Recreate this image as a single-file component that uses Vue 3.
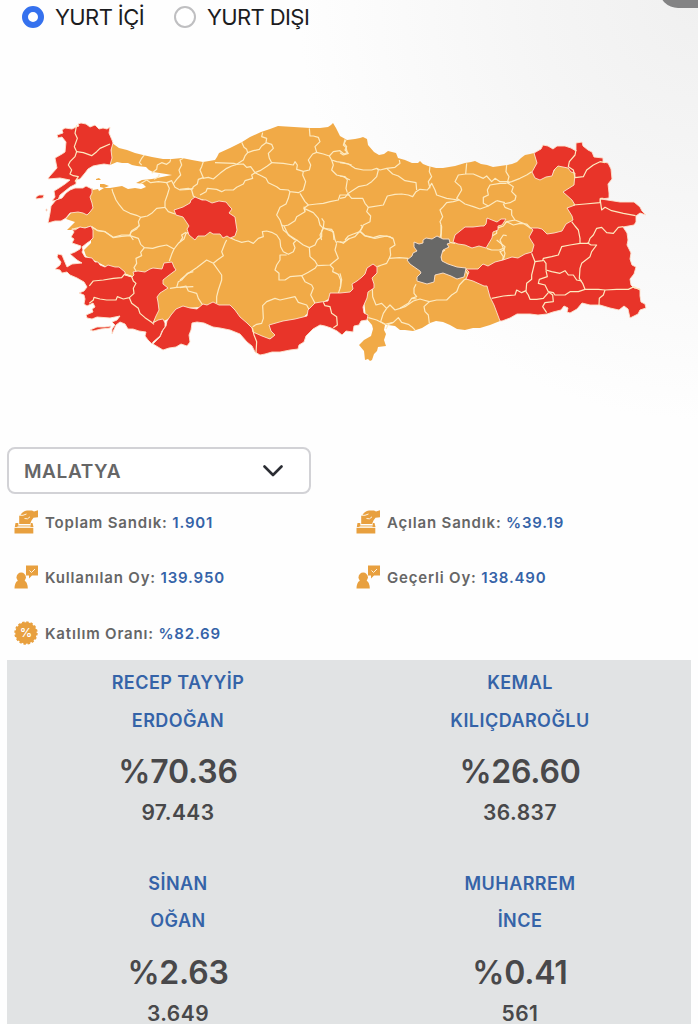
<template>
  <div class="content">
    <div class="corner"></div>

    <div class="radios">
      <label v-for="area in areas" :key="area" class="radio">
        <input v-model="selectedArea" type="radio" name="area" :value="area">
        <span>{{ area }}</span>
      </label>
    </div>

    <svg class="map" viewBox="0 36 698 400" width="698" height="400">
      <path v-for="d in land" :key="d" class="land" :d="d" />
      <g v-for="sheet in borders" :key="sheet.x + '-' + sheet.y" :transform="`translate(${sheet.x} ${sheet.y}) scale(.33333)`">
        <polyline v-for="line in sheet.lines" :key="line" class="border" :points="line" />
      </g>
      <path v-for="d in redProvinces" :key="d" class="province red" :d="d" />
      <path class="province selected" :d="selectedProvince" />
      <g v-for="sheet in redBorders" :key="sheet.x + '-' + sheet.y" :transform="`translate(${sheet.x} ${sheet.y}) scale(.33333)`">
        <polyline v-for="line in sheet.lines" :key="line" class="border" :points="line" />
      </g>
    </svg>

    <div class="select">
      <span>MALATYA</span>
      <svg width="20" height="12" viewBox="0 0 20 12"><path d="M1.5 1.5 10 10l8.500-8.500" /></svg>
    </div>

    <div class="infos">
      <div v-for="info in infos" :key="info.label" class="info">
        <svg v-if="info.icon === 'box'" class="icon" viewBox="0 0 24 24">
          <path d="M6.500 5Q8.500 1.200 13 .5h5l2 1L24 .3v7l-4.500.5-2 2.700-1.500 3.500H5.200V5Z" />
          <path d="M1.500 13h2.800v2.500h12.400V13h1.800l1 4H.8Z" />
          <path d="M.5 17.800h18.800v5.700H.5Z" />
          <path class="cut" d="M5 5.300h4L12.500 4M10.500 8.500l3 .3 2.500-2M3.500 16.800h13" />
        </svg>
        <svg v-else-if="info.icon === 'vote'" class="icon" viewBox="0 0 24 24">
          <circle cx="7.200" cy="12.200" r="4.700" />
          <path d="M4 14.500h6.400l.4 1.500q2.700 1 3 7.500H.5Q.8 17 3.600 16Z" />
          <path d="M12 .5h12v10h-6l-3 3v-3h-3Z" />
          <path class="cut" d="m15.500 5.500 2 2 3.500-3.500" />
        </svg>
        <svg v-else class="icon" viewBox="0 0 24 24">
          <circle cx="12" cy="12" r="10.700" />
          <circle class="scallop" cx="12" cy="12" r="10.700" />
          <text x="12" y="16.200" text-anchor="middle">%</text>
        </svg>
        <span>{{ info.label }}: <b>{{ info.value }}</b></span>
      </div>
    </div>

    <div class="results">
      <div v-for="candidate in candidates" :key="candidate.last" class="candidate">
        <div class="name">{{ candidate.first }}</div>
        <div class="name">{{ candidate.last }}</div>
        <div class="rate">{{ candidate.rate }}</div>
        <div class="votes">{{ candidate.votes }}</div>
      </div>
    </div>
  </div>
</template>

<script setup>
import { ref } from 'vue';

const areas = ['YURT İÇİ', 'YURT DIŞI']
const selectedArea = ref('YURT İÇİ')

const infos = [
  { icon: 'box', label: 'Toplam Sandık', value: '1.901' },
  { icon: 'box', label: 'Açılan Sandık', value: '%39.19' },
  { icon: 'vote', label: 'Kullanılan Oy', value: '139.950' },
  { icon: 'vote', label: 'Geçerli Oy', value: '138.490' },
  { icon: 'percent', label: 'Katılım Oranı', value: '%82.69' }
]

const candidates = [
  { first: 'RECEP TAYYİP', last: 'ERDOĞAN', rate: '%70.36', votes: '97.443' },
  { first: 'KEMAL', last: 'KILIÇDAROĞLU', rate: '%26.60', votes: '36.837' },
  { first: 'SİNAN', last: 'OĞAN', rate: '%2.63', votes: '3.649' },
  { first: 'MUHARREM', last: 'İNCE', rate: '%0.41', votes: '561' }
]

// mainland, then the Marmara islands
const land = [
  'M112 143 L119 148 127 150 135 153 143 155 152 157 163 159 172 159 182 158 192 160 203 162 209 161 215 160 217 157 219 153 230 148 242 142 250 137 261 132 270 129 278 126 294 127 310 128 320 128 328 127 331 125 333 123 336 128 340 136 347 140 355 139 360 138 363 137 367 139 368 145 374 152 379 155 384 154 388 151 396 153 398 158 405 160 412 163 418 163 420 161 423 164 428 166 436 168 443 168 455 166 465 163 471 162 475 161 481 164 487 165 493 167 500 166 507 165 512 164 517 162 521 158 525 155 530 154 534 153 L538 165 552 175 558 164 568 165 577 172 577 190 577 208 577 222 562 234 540 238 536 262 510 270 502 315 500 321 490 325 480 328 473 328 465 330 457 329 450 325 443 322 436 321 430 323 422 328 413 331 405 330 400 330 395 326 388 325 385 325 384 330 386 334 384 340 386 346 378 347 377 351 374 354 372 360 370 361 368 359 365 360 364 351 359 345 364 340 371 336 373 329 372 325 366 318 L364 300 350 295 332 297 316 306 300 320 284 330 266 341 254 335 240 319 225 308 203 307 183 308 166 320 155 324 150 300 150 275 132 276 105 266 86 256 84 250 91 243 91 232 72 230 67 230 69 228 75 222 66 219 92 188 93 190 98 189 99 191 104 188 110 188 116 187 122 186 128 189 135 188 141 189 146 187 143 184 136 183 142 180 152 179 172 175 166 174 153 172 149 170 146 167 137 166 132 165 128 163 122 163 117 162 110 165 Z',
  'M96 179 99 178 101 180 96 180 Z M100 184 104 184 109 186 104 188 100 187 Z'
]

const redProvinces = [
  // Trakya
  'M57 135 63 133 62 130 65 128 72 129 76 127 79 126 78 124 81 123 86 124 90 127 95 125 99 129 103 128 107 129 110 127 109 133 112 140 113 143 111 150 112 158 110 165 104 164 98 165 93 166 88 169 85 173 80 179 76 180 76 184 70 187 65 191 60 195 58 200 52 201 55 197 54 191 59 188 65 184 70 180 60 178 48 179 49 177 57 168 55 158 62 154 65 152 66 142 62 137 58 138 Z',
  'M36 197 39 195 44 195 43 198 36 199 Z M46 209 47 209 47 211 46 211 Z',
  // Çanakkale
  'M48 223 50 213 51 206 56 200 62 198 66 193 70 190 75 188 83 188 86 186 92 189 92 193 90 197 92 203 93 208 90 212 87 215 83 213 78 212 70 213 66 218 61 221 55 221 Z',
  // İzmir, Manisa coast, Aydın, Muğla, Denizli
  'M72 229 75 230 80 227 85 228 91 226 93 230 93 238 90 241 87 243 82 247 83 250 82 252 85 257 92 258 95 262 98 262 100 265 105 267 108 265 115 267 119 267 125 272 125 275 132 277 134 275 133 272 138 271 145 272 150 269 153 268 162 269 164 263 172 262 174 267 176 270 168 276 163 280 163 284 168 288 160 293 157 297 158 302 159 310 156 316 153 323 158 320 163 319 165 323 165 327 162 331 160 336 153 342 152 344 148 340 145 336 146 332 139 331 133 329 128 329 125 324 120 322 116 325 112 334 112 329 115 325 112 322 117 320 120 316 110 318 97 317 92 319 87 318 86 315 93 312 92 309 95 307 93 303 87 306 84 304 85 299 84 295 79 293 84 291 87 287 84 282 77 278 70 275 67 272 62 273 60 270 55 269 60 265 61 262 57 257 58 254 62 255 64 260 67 267 72 264 82 263 77 260 70 254 75 252 80 249 81 246 75 244 72 243 74 239 71 237 74 232 Z',
  'M90 330 97 327 105 327 111 326 110 328 101 329 93 331 Z',
  // Antalya, Mersin, Adana
  'M153 344 160 337 163 330 166 326 167 321 171 315 176 309 183 306 190 308 197 309 203 304 207 305 213 302 219 305 230 305 235 310 240 317 247 323 252 328 253 332 262 336 270 339 275 335 271 331 269 325 276 323 283 321 295 319 307 316 308 310 315 303 321 302 328 301 330 293 340 293 350 292 353 289 352 284 357 281 362 277 365 274 367 268 373 264 377 267 377 273 372 278 374 284 374 288 368 292 367 298 363 307 364 313 368 315 367 320 361 321 359 325 354 326 353 332 346 331 342 335 337 331 331 328 325 326 320 325 313 329 306 336 304 342 299 345 298 349 290 350 280 352 272 352 265 354 260 355 255 352 252 346 247 342 240 334 230 330 220 328 213 327 204 323 197 322 192 323 191 330 189 335 190 342 187 346 181 344 176 347 169 348 163 350 Z',
  // Eskişehir
  'M183 207 190 203 191 200 195 197 202 200 206 200 212 203 219 201 226 202 230 207 232 209 229 213 235 217 236 224 237 230 235 236 230 238 227 236 223 238 220 234 213 234 210 232 205 236 198 236 195 240 189 235 187 229 189 226 183 217 176 215 174 210 Z',
  // Tunceli
  'M453 242 455 235 460 231 465 227 473 227 481 226 484 226 486 224 487 218 492 220 497 222 501 219 506 219 502 225 498 226 498 230 493 232 492 238 489 243 486 248 479 246 472 248 465 245 458 244 Z',
  // Doğu
  'M534 153 541 149 543 145 548 146 553 149 557 146 565 146 571 148 576 151 576 143 582 142 583 146 588 150 592 152 594 157 603 158 603 162 608 163 611 169 612 179 608 184 609 193 609 198 601 199 620 202 627 202 634 202 640 207 642 211 646 215 640 213 636 216 636 222 634 225 623 227 627 233 628 240 627 245 631 253 630 259 632 265 636 267 634 274 630 279 631 285 634 288 640 289 640 296 641 302 645 304 646 308 640 310 638 314 632 317 630 318 628 309 624 306 619 310 610 308 600 305 590 305 582 303 577 309 570 313 567 312 568 308 564 306 561 310 553 312 547 314 538 315 530 314 517 314 510 318 502 321 500 321 497 313 494 305 490 297 487 286 484 286 473 281 466 279 469 272 466 269 472 269 478 269 483 264 488 266 495 262 503 260 512 257 518 258 525 254 532 252 534 245 529 237 533 230 531 228 538 228 542 229 547 234 554 233 562 231 566 224 573 220 572 216 567 208 575 205 572 200 563 192 574 185 575 173 571 172 568 168 558 166 554 170 552 176 546 177 540 180 535 178 532 172 537 163 Z'
]

const selectedProvince = 'M407 260 412 256 413 253 417 251 414 247 414 242 419 244 423 243 423 240 426 238 432 239 437 236 443 239 449 239 450 243 447 244 449 247 443 250 441 257 442 261 448 264 457 267 466 268 465 273 464 277 457 279 451 276 443 273 435 275 434 282 427 284 417 281 417 277 421 273 420 271 410 264 Z'

// borders are kept in separate sheets, three units per pixel
const borders = [
  {
    x: 30, y: 110,
    lines: [
      '335,165 328,158 335,145 343,135',
      '365,190 380,178 382,165 395,158 410,163 420,155 422,148',
      '372,208 386,200 388,192',
      '460,145 450,150 455,165 447,180 452,195 440,208 430,222',
      '330,222 350,210 362,218 385,215 410,218 425,212 430,222 435,232 450,240 475,238 490,235',
      '410,218 418,235 412,255 405,275 405,292 380,295 365,310 352,318 332,322 320,316 300,310 280,300 268,285 258,270 248,245 246,237',
      '405,292 415,305 435,312',
      '332,322 325,335 328,348 305,362 300,375 310,390',
      '125,358 150,352 160,355 185,350 200,360 225,365 250,382 275,375 300,375'
    ]
  },
  {
    x: 30, y: 225,
    lines: [
      '185,5 205,18 225,20 250,38 275,34 300,32 325,40 332,58 343,68 368,70 385,65 410,60 432,72 445,55 462,42 468,25 480,20',
      '300,32 302,22 320,12 328,0',
      '343,68 332,82 335,92 318,100 320,115 312,128 318,138',
      '432,72 425,88 418,108',
      '490,140 472,145 455,165 445,170 440,187 490,185',
      '440,187 420,190'
    ]
  },
  {
    x: 180, y: 110,
    lines: [
      '70,155 65,170 60,180 70,203 55,208 52,222 40,230 35,240 40,258 50,265 70,270',
      '0,238 25,235 35,240',
      '68,205 85,202 100,207 120,190 140,175 155,168 170,163 162,160 105,158',
      '170,163 190,150 195,138 203,128 200,118 192,112 185,97',
      '203,128 220,122 238,118 245,108 258,98 260,85 245,80 248,68',
      '258,98 275,103 280,115 265,130 268,145 275,158 262,168 240,182 225,188 212,170 200,172 190,162 170,163',
      '275,158 310,160 340,165 345,155 352,165 350,178 370,184 388,180 392,165 385,150 398,132 410,127 405,110 420,95 415,82 400,78 390,78 388,55',
      '410,127 430,132 448,138 455,150 470,155 490,158 515,165',
      '448,138 460,125 480,122 492,132 502,128 498,112 490,105 498,90',
      '225,188 215,195 218,205 195,212 190,222 170,232 160,240 135,240 125,245 110,238 82,235 78,245 60,255',
      '225,188 245,198 258,205 265,218 290,230 300,238 325,240 330,245 355,248 370,240 377,215 368,195 370,184',
      '330,245 325,265 318,282 300,292 290,315 300,330 305,345 312,348 325,375 345,390',
      '360,250 375,275 385,285 372,295 375,305 350,320 345,332 325,345 312,348',
      '385,285 410,282 430,280 450,275 475,270 480,255 510,255',
      '372,295 400,308 415,325 420,345 430,355 420,375 425,390',
      '430,355 455,358 460,370 462,390',
      '455,150 460,165 455,180 470,195 490,200 510,210',
      '375,305 372,290'
    ]
  },
  {
    x: 180, y: 225,
    lines: [
      '0,50 8,38 5,30 18,22',
      '0,165 25,145 50,128 80,105 100,115 112,105 130,92 125,80 135,55 140,45',
      '100,115 125,150 125,165 115,195 110,215 110,235',
      '0,188 18,183 25,198 50,205 55,220 68,240',
      '150,38 165,45 185,52 205,48 220,55 235,40 250,35 247,20 260,18 275,22 290,30 300,45 302,65 310,80 325,88 340,80 345,68 340,55 350,45 330,32 310,15 305,0',
      '320,90 300,90 300,105 290,120 285,135 297,145 297,165 315,165 330,155 365,152 385,142 405,130 412,120 405,108 390,95 388,68 370,60 350,45',
      '388,68 405,60 412,45 425,35 425,18 430,8 445,15 460,20 465,45 470,55',
      '425,-20 432,-10 430,8',
      '470,55 465,75 475,100 450,120 412,122',
      '450,120 460,130 458,140 475,148 482,165 482,185 475,205',
      '365,152 375,170 395,180 400,190 392,210 405,235',
      '218,305 230,298 245,295 250,280 248,242 260,230 285,220 300,225 345,215 355,232 380,240 388,255',
      '470,50 490,52 510,40'
    ]
  },
  {
    x: 340, y: 110,
    lines: [
      '15,88 12,100 20,110 15,120 25,130 10,135 0,128',
      '0,158 25,162 45,175 70,180 95,180 110,175 115,180 110,200 95,215 80,225 55,230 25,250 15,262 0,265',
      '0,198 15,200 22,210 18,235 22,248',
      '22,250 35,265 68,265 75,280 85,292 130,285 142,258 165,253 185,252 205,255 218,260 228,245 240,238 262,240 268,232 275,220 285,240 290,255 320,265 355,270',
      '110,175 120,180 140,175 165,172 180,160 178,150',
      '140,175 158,192 175,198 195,212 228,218 230,240',
      '270,168 268,185 275,200 265,215 270,235',
      '380,160 377,192 355,195 345,215 362,230 365,240 350,265 358,270 375,282 400,290 420,297 445,288',
      '377,192 400,192 430,205 440,198 455,215 465,205 480,215 505,215 510,218',
      '500,220 480,220 450,225 442,240 445,255 430,262 430,280 445,288 470,272',
      '358,270 340,275 320,278 310,290 300,300 308,320 300,335 305,350 303,385',
      '85,292 80,305 92,318 90,335 70,345 60,365 40,372 25,378 15,390',
      '60,365 75,378 105,385 140,378 160,385'
    ]
  },
  {
    x: 340, y: 225,
    lines: [
      '0,50 10,55 25,42 45,35 60,18 75,32 100,38 120,32 150,35 160,42 165,60 150,70 152,90 148,100 178,98 205,100',
      '60,18 68,5 62,0',
      '148,100 140,115 125,120 112,125',
      '97,190 98,215 108,240 125,235 140,250 150,240 165,255 180,250 205,235 215,220 230,215 222,205 222,190 228,178',
      '140,250 130,265 122,290 135,298',
      '85,278 110,285 135,298 160,292 175,278 185,292 205,298 215,305 225,315',
      '160,292 145,298 138,312',
      '180,250 195,245 220,228 240,222 250,225 268,230 290,225 320,225 335,210 350,200 358,180 372,165 385,158 382,145 375,135',
      '215,220 230,222',
      '268,230 252,245 255,260 265,270 268,295',
      '303,0 303,25 300,38',
      '330,52 345,55',
      '305,108 300,85 315,75',
      '440,70 455,75 478,75 490,70 480,45 490,30 500,32',
      '490,70 495,85 490,105 478,108',
      '0,145 5,165 0,190'
    ]
  },
  {
    x: 490, y: 120,
    lines: [
      '50,135 48,155 57,170 52,188 65,185 90,175 110,165 125,155',
      '52,188 70,200 65,215 78,228 75,240 60,248 40,252 45,262 65,270 65,285 75,300 100,310 122,325',
      '20,242 45,248',
      '75,300 50,305 45,308'
    ]
  },
  {
    x: 490, y: 220,
    lines: [
      '50,5 40,18 20,25 20,40 0,52',
      '50,5 70,15 90,10 110,12 122,25',
      '20,60 45,80 42,90 30,95 40,110 38,120'
    ]
  }
]

const redBorders = [
  {
    x: 30, y: 110,
    lines: [
      '140,45 135,70 142,85 133,110 140,125 135,140 120,155 115,165 125,180 120,192 130,197 145,200 135,215',
      '140,125 160,128 185,137 200,125 210,115 240,102'
    ]
  },
  {
    x: 30, y: 225,
    lines: [
      '178,183 190,168 220,165 250,160 275,158 283,148 305,155 310,168 318,175 310,190 312,205 298,218 280,222 262,215 258,225 230,225 210,222 192,217 190,225 178,235',
      '298,218 305,235 325,250 330,265 345,278 365,292 372,298'
    ]
  },
  {
    x: 180, y: 225,
    lines: [
      '217,308 222,330 230,350 228,385',
      '430,232 435,242 450,245 455,265 470,275 472,300 460,308'
    ]
  },
  {
    x: 490, y: 120,
    lines: [
      '258,90 255,105 238,125 235,140 250,150 255,173 280,170 290,150 310,135 330,125 345,128',
      '250,255 285,252 330,248 332,235 340,235',
      '330,235 335,270 345,262 365,272 400,280 437,287'
    ]
  },
  {
    x: 490, y: 220,
    lines: [
      '245,5 255,18 265,30 270,55 270,70 240,75 215,80 205,105 185,110 160,115 158,122 135,125 125,100',
      '270,70 295,70 300,55 310,45 320,25 335,22 350,38 370,40 385,22 400,20',
      '292,68 303,75 320,75 305,95 300,110 275,130 270,145 268,175 278,190 285,208 325,208 345,210 380,208 415,208 432,200 450,210',
      '345,210 340,225 328,235 327,255',
      '160,120 168,130 168,150 185,155 210,160 225,152 235,165 250,165 260,180 275,183',
      '168,152 172,170 148,178 145,190 165,195 175,215 190,218 195,225 225,225 240,215 265,215 285,208',
      '135,125 130,145 125,165 125,178 110,190 108,215 115,225 120,238 140,238 160,235 175,218',
      '5,235 40,228 75,225 80,210 95,218 108,212',
      '175,215 188,225 190,245 165,248 158,260 170,278'
    ]
  }
]
</script>

<style>
body {
  margin: 0;
  background: #fff;
}
</style>

<style scoped>
.content {
  position: relative;
  width: 698px;
  height: 1024px;
  overflow: hidden;
  font-family: Inter, "Liberation Sans", sans-serif;
  background:
    radial-gradient(ellipse 400px 420px at 100% 0, #f0f0f0 0%, #f5f5f5 40%, rgba(255, 255, 255, 0) 100%),
    #fefefe;
}

.corner {
  position: absolute;
  top: -30px;
  left: 659px;
  width: 90px;
  height: 38px;
  border-radius: 19px;
  background: #838384;
}

.radios {
  display: flex;
  height: 36px;
  padding-left: 22px;
  box-sizing: border-box;
}

.radio {
  display: flex;
  align-items: center;
  height: 34px;
  margin-right: 30px;
  font-size: 22px;
  letter-spacing: -.6px;
  color: #1c1c1e;
}

.radio input {
  appearance: none;
  box-sizing: border-box;
  width: 22px;
  height: 22px;
  margin: 0 11px 0 0;
  border: 2px solid #bfbfc1;
  border-radius: 50%;
  background: #fff;
}

.radio input:checked {
  border: 6.500px solid #3571ee;
}

.map {
  display: block;
}

.land {
  fill: #f1aa47;
}

.border {
  fill: none;
  stroke: #fdeac0;
  stroke-width: 3.600;
  stroke-linejoin: round;
}

.province {
  stroke: #fde3cf;
  stroke-width: .9;
  stroke-linejoin: round;
}

.red {
  fill: #e83429;
}

.selected {
  fill: #686867;
}

.select {
  display: flex;
  align-items: center;
  justify-content: space-between;
  box-sizing: border-box;
  width: 304px;
  height: 47px;
  margin: 11px 0 0 7px;
  padding: 1px 26px 0 15px;
  border: 2px solid #d2d2d6;
  border-radius: 8px;
  background: #fff;
  font-size: 19px;
  font-weight: 600;
  letter-spacing: .6px;
  color: #666;
}

.select path {
  fill: none;
  stroke: #2b2d33;
  stroke-width: 2.600;
  stroke-linecap: round;
  stroke-linejoin: round;
}

.infos {
  display: grid;
  grid-template-columns: 342px 342px;
  grid-template-rows: repeat(3, 55.500px);
  height: 166px;
  padding-left: 14px;
}

.info {
  display: flex;
  align-items: center;
  gap: 7px;
  font-size: 15px;
  font-weight: 600;
  letter-spacing: .82px;
  color: #666;
}

.info span {
  padding-top: 1px;
}

.info b {
  font-weight: 600;
  color: #3563a8;
}

.icon {
  width: 24px;
  height: 24px;
  fill: #e8a03f;
}

.cut {
  fill: none;
  stroke: #fdf3e2;
  stroke-width: 1;
}

.scallop {
  fill: none;
  stroke: #e8a03f;
  stroke-width: 2;
  stroke-dasharray: 2.400 1.802;
}

.icon text {
  font-size: 12px;
  font-weight: 600;
  letter-spacing: 0;
  fill: #fff;
}

.results {
  display: grid;
  grid-template-columns: 1fr 1fr;
  grid-auto-rows: 200.500px;
  width: 684px;
  height: 400px;
  margin-left: 7px;
  background: #e1e3e4;
  text-align: center;
}

.candidate {
  padding-top: 4px;
}

.name {
  height: 37.500px;
  line-height: 38px;
  font-size: 18px;
  font-weight: 600;
  letter-spacing: .45px;
  color: #3563a8;
}

.rate {
  height: 56px;
  padding-top: 5px;
  box-sizing: border-box;
  line-height: 56px;
  font-size: 32px;
  font-weight: 600;
  letter-spacing: -.2px;
  color: #48484a;
}

.votes {
  line-height: 36px;
  font-size: 21px;
  font-weight: 600;
  letter-spacing: .45px;
  color: #48484a;
}
</style>
